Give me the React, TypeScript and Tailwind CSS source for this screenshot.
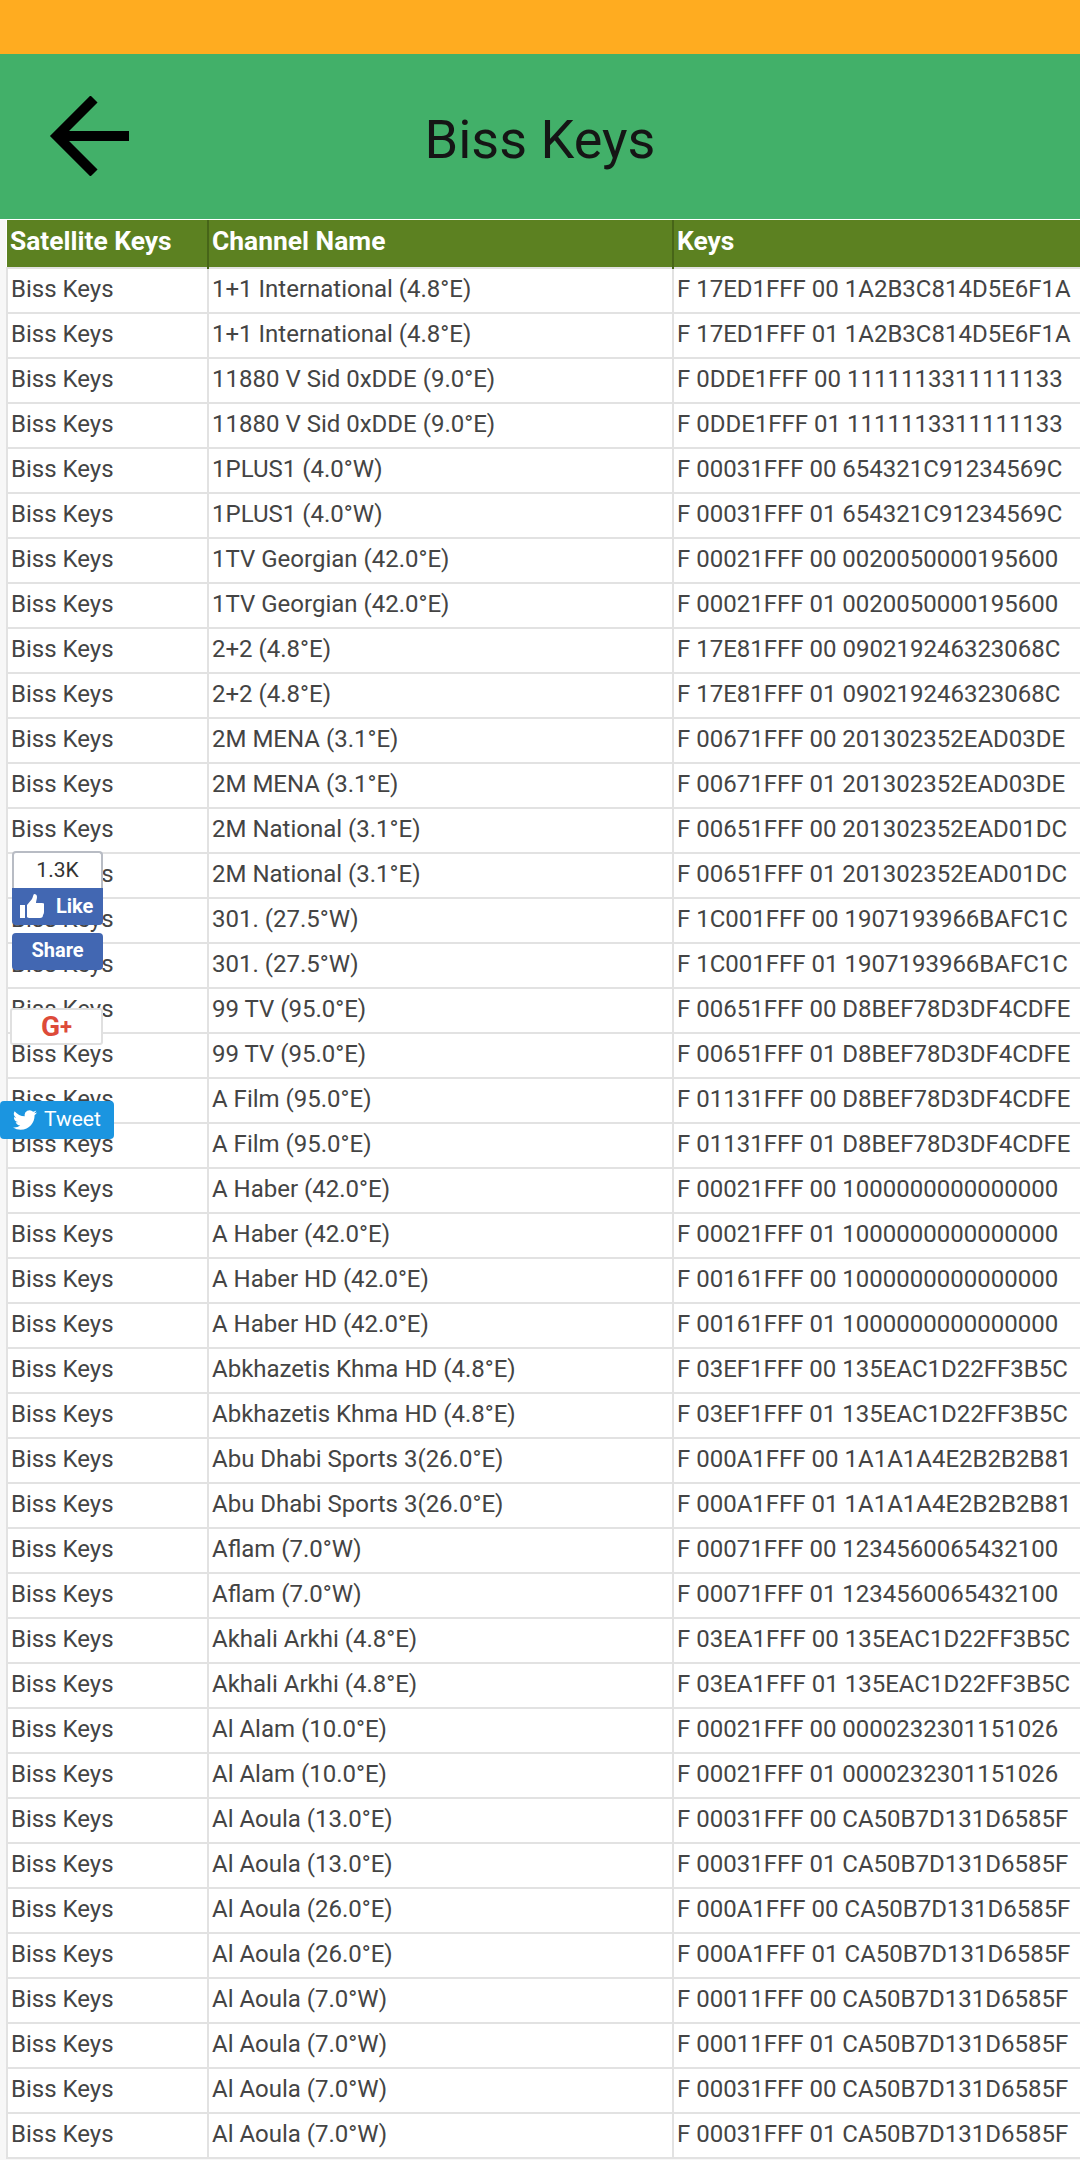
const data: [string, string][] = [
  ["1+1 International (4.8°E)", "F 17ED1FFF 00 1A2B3C814D5E6F1A"],
  ["1+1 International (4.8°E)", "F 17ED1FFF 01 1A2B3C814D5E6F1A"],
  ["11880 V Sid 0xDDE (9.0°E)", "F 0DDE1FFF 00 1111113311111133"],
  ["11880 V Sid 0xDDE (9.0°E)", "F 0DDE1FFF 01 1111113311111133"],
  ["1PLUS1 (4.0°W)", "F 00031FFF 00 654321C91234569C"],
  ["1PLUS1 (4.0°W)", "F 00031FFF 01 654321C91234569C"],
  ["1TV Georgian (42.0°E)", "F 00021FFF 00 0020050000195600"],
  ["1TV Georgian (42.0°E)", "F 00021FFF 01 0020050000195600"],
  ["2+2 (4.8°E)", "F 17E81FFF 00 090219246323068C"],
  ["2+2 (4.8°E)", "F 17E81FFF 01 090219246323068C"],
  ["2M MENA (3.1°E)", "F 00671FFF 00 201302352EAD03DE"],
  ["2M MENA (3.1°E)", "F 00671FFF 01 201302352EAD03DE"],
  ["2M National (3.1°E)", "F 00651FFF 00 201302352EAD01DC"],
  ["2M National (3.1°E)", "F 00651FFF 01 201302352EAD01DC"],
  ["301. (27.5°W)", "F 1C001FFF 00 1907193966BAFC1C"],
  ["301. (27.5°W)", "F 1C001FFF 01 1907193966BAFC1C"],
  ["99 TV (95.0°E)", "F 00651FFF 00 D8BEF78D3DF4CDFE"],
  ["99 TV (95.0°E)", "F 00651FFF 01 D8BEF78D3DF4CDFE"],
  ["A Film (95.0°E)", "F 01131FFF 00 D8BEF78D3DF4CDFE"],
  ["A Film (95.0°E)", "F 01131FFF 01 D8BEF78D3DF4CDFE"],
  ["A Haber (42.0°E)", "F 00021FFF 00 1000000000000000"],
  ["A Haber (42.0°E)", "F 00021FFF 01 1000000000000000"],
  ["A Haber HD (42.0°E)", "F 00161FFF 00 1000000000000000"],
  ["A Haber HD (42.0°E)", "F 00161FFF 01 1000000000000000"],
  ["Abkhazetis Khma HD (4.8°E)", "F 03EF1FFF 00 135EAC1D22FF3B5C"],
  ["Abkhazetis Khma HD (4.8°E)", "F 03EF1FFF 01 135EAC1D22FF3B5C"],
  ["Abu Dhabi Sports 3(26.0°E)", "F 000A1FFF 00 1A1A1A4E2B2B2B81"],
  ["Abu Dhabi Sports 3(26.0°E)", "F 000A1FFF 01 1A1A1A4E2B2B2B81"],
  ["Aflam (7.0°W)", "F 00071FFF 00 1234560065432100"],
  ["Aflam (7.0°W)", "F 00071FFF 01 1234560065432100"],
  ["Akhali Arkhi (4.8°E)", "F 03EA1FFF 00 135EAC1D22FF3B5C"],
  ["Akhali Arkhi (4.8°E)", "F 03EA1FFF 01 135EAC1D22FF3B5C"],
  ["Al Alam (10.0°E)", "F 00021FFF 00 0000232301151026"],
  ["Al Alam (10.0°E)", "F 00021FFF 01 0000232301151026"],
  ["Al Aoula (13.0°E)", "F 00031FFF 00 CA50B7D131D6585F"],
  ["Al Aoula (13.0°E)", "F 00031FFF 01 CA50B7D131D6585F"],
  ["Al Aoula (26.0°E)", "F 000A1FFF 00 CA50B7D131D6585F"],
  ["Al Aoula (26.0°E)", "F 000A1FFF 01 CA50B7D131D6585F"],
  ["Al Aoula (7.0°W)", "F 00011FFF 00 CA50B7D131D6585F"],
  ["Al Aoula (7.0°W)", "F 00011FFF 01 CA50B7D131D6585F"],
  ["Al Aoula (7.0°W)", "F 00031FFF 00 CA50B7D131D6585F"],
  ["Al Aoula (7.0°W)", "F 00031FFF 01 CA50B7D131D6585F"],
];

export default function App() {
  return (
    <div className="relative h-[2160px] w-[1080px] overflow-hidden bg-[#f7f7f7] font-['Roboto',sans-serif]">
      <div className="h-[54px] bg-[#ffac20]" />
      <header className="relative flex h-[165px] items-center justify-center bg-[#42b069]">
        <svg className="absolute left-[49px] top-[42px] h-[80px] w-[80px]" viewBox="0 0 80 80" fill="none" stroke="#000" strokeWidth="10">
          <path d="M81 40H8" />
          <path d="M45 3L8 40L45 77" />
        </svg>
        <h1 className="pt-[6px] text-[54px] font-normal leading-none text-[#151515]">Biss Keys</h1>
      </header>
      <div className="h-px bg-white" />
      <table className="ml-[6px] w-[1074px] table-fixed border-collapse bg-white text-[24px] text-[#444]">
        <colgroup>
          <col className="w-[201px]" />
          <col className="w-[465px]" />
          <col />
        </colgroup>
        <thead>
          <tr className="h-[48px] border-b-2 border-[#e2e2e2] bg-[#5c8121] text-left text-[26.4px] font-bold text-white">
            <th className="border-r-2 border-[#476518] pb-[3px] pl-[3px]">Satellite Keys</th>
            <th className="border-r-2 border-[#476518] pb-[3px] pl-[3px]">Channel Name</th>
            <th className="pb-[3px] pl-[3px]">Keys</th>
          </tr>
        </thead>
        <tbody>
          {data.map((row, i) => (
            <tr key={i} className="h-[45px] border-b-2 border-[#e2e2e2]">
              <td className="border-x-2 border-[#e2e2e2] pb-[3px] pl-[3px]">Biss Keys</td>
              <td className="border-r-2 border-[#e2e2e2] pb-[3px] pl-[3px]">{row[0]}</td>
              <td className="whitespace-nowrap pb-[3px] pl-[3px]">{row[1]}</td>
            </tr>
          ))}
        </tbody>
      </table>

      <div className="absolute left-[12px] top-[851px] flex h-[38px] w-[91px] items-center justify-center rounded-t-[4px] border-2 border-b-0 border-[#b8bcc4] bg-white text-[21px] text-[#333]">1.3K</div>
      <div className="absolute left-[12px] top-[888px] flex h-[37px] w-[91px] items-center rounded-b-[4px] bg-[#4267b2] pb-[1px] pl-[8px] text-[20px] font-bold text-white">
        <svg className="h-[24px] w-[24px]" viewBox="0 0 24 24" fill="#fff">
          <path d="M0 11h5v13H0zM7 11l5-6c1-2 1-4 2-5 2 0 3 1 3 3 0 2-1 4-1 6h6c2 0 3 1 3 3l-1 1c1 1 1 3 0 4 0 1 0 3-1 4 0 2-1 3-3 3H9c-1 0-2-1-2-1z" />
        </svg>
        <span className="ml-[12px]">Like</span>
      </div>
      <div className="absolute left-[12px] top-[933px] flex h-[37px] w-[91px] items-center justify-center rounded-[4px] bg-[#4267b2] pb-[3px] text-[20px] font-bold text-white">Share</div>
      <div className="absolute left-[10px] top-[1008px] flex h-[37px] w-[93px] items-center justify-center rounded-[3px] border-2 border-[#e0e0e0] bg-white font-bold leading-none text-[#dd4b39]">
        <span className="text-[28px]">G</span>
        <span className="text-[22px]">+</span>
      </div>
      <div className="absolute left-0 top-[1101px] flex h-[38px] w-[114px] items-center gap-[7px] rounded-[4px] bg-[#1b95e0] pb-[1px] pl-[13px] text-[21px] text-white">
        <svg className="h-[24px] w-[24px]" viewBox="0 0 24 24" fill="#fff">
          <path d="M23.95 4.57a10 10 0 0 1-2.82.77 4.96 4.96 0 0 0 2.16-2.72 9.9 9.9 0 0 1-3.12 1.18 4.92 4.92 0 0 0-8.38 4.48A13.98 13.98 0 0 1 1.64 3.16a4.92 4.92 0 0 0 1.52 6.57 4.9 4.9 0 0 1-2.23-.61v.06a4.92 4.92 0 0 0 3.95 4.83 5 5 0 0 1-2.21.08 4.94 4.94 0 0 0 4.6 3.42A9.87 9.87 0 0 1 0 19.54a14 14 0 0 0 7.56 2.21c9.05 0 14-7.5 14-13.98 0-.21 0-.42-.02-.63a9.94 9.94 0 0 0 2.46-2.55z" />
        </svg>
        <span>Tweet</span>
      </div>
    </div>
  );
}
